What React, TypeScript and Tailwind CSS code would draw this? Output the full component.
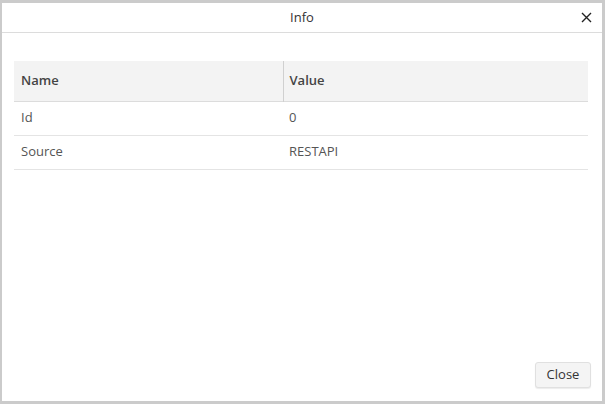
const rows = [
  {name: 'Id', value: '0'},
  {name: 'Source', value: 'RESTAPI'},
];

export default function App() {
  return (
    <div
      className="w-[605px] h-[404px] bg-[#cbcbcb] pl-[2px] pr-[3px] pb-[3px] pt-[3px] overflow-hidden"
      style={{fontFamily: '"Open Sans", "Noto Sans", sans-serif'}}
    >
      <div className="flex h-full flex-col bg-white">
        <div className="relative flex h-[30px] items-center justify-center border-b border-[#dcdcdc]">
          <span className="text-[13px] text-[#333]">Info</span>
          <button className="absolute right-[8px] top-[6px] flex h-[16px] w-[16px] items-center justify-center text-[#222]">
            <svg width="11" height="11" viewBox="0 0 11 11" fill="none" stroke="currentColor" strokeWidth="1.4">
              <path d="M1 1L10 10M10 1L1 10" />
            </svg>
          </button>
        </div>

        <div className="flex-1 px-[12px] pt-[28px]">
          <table className="w-[574px] border-collapse text-[13px]">
            <thead>
              <tr className="h-[40px] bg-[#f3f3f3] border-b border-[#dcdcdc]">
                <th className="w-[269px] border-r border-[#d0d0d0] pl-[7px] text-left font-semibold text-[#444]">
                  Name
                </th>
                <th className="pl-[6px] text-left font-semibold text-[#444]">Value</th>
              </tr>
            </thead>
            <tbody>
              {rows.map((r) => (
                <tr key={r.name} className="h-[34px] border-b border-[#e4e4e4]">
                  <td className="pl-[7px] text-[#555]">{r.name}</td>
                  <td className="pl-[6px] text-[#555]">{r.value}</td>
                </tr>
              ))}
            </tbody>
          </table>
        </div>

        <div className="flex justify-end pr-[11px] pb-[13px]">
          <button className="h-[26px] w-[56px] rounded-[3px] border border-[#e0e0e0] bg-[#f4f4f4] text-[13px] text-[#333] shadow-[0_1px_1px_rgba(0,0,0,0.08)]">
            Close
          </button>
        </div>
      </div>
    </div>
  );
}
